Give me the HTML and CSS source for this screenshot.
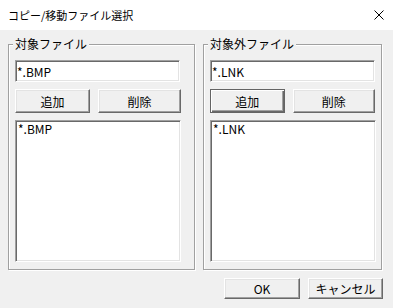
FILE: index.html
```html
<!DOCTYPE html>
<html lang="ja">
<head>
    <meta charset="UTF-8">
    <title>コピー/移動ファイル選択</title>
    <link rel="stylesheet" href="styles.css">
</head>
<body>
    <div class="titlebar">
        <span class="title">コピー/移動ファイル選択</span>
        <svg class="close" width="10" height="10" viewBox="0 0 10 10">
            <path d="M0.5 0.5 L9.5 9.5 M9.5 0.5 L0.5 9.5" stroke="#000" stroke-width="1" fill="none"/>
        </svg>
    </div>
    <div class="content">
        <div class="groups">
            <fieldset class="group group-left">
                <legend>対象ファイル</legend>
                <input class="field" type="text" value="*.BMP">
                <div class="btn-row">
                    <button class="btn btn-add">追加</button>
                    <button class="btn btn-del">削除</button>
                </div>
                <div class="list">
                    <div class="item">*.BMP</div>
                </div>
            </fieldset>
            <fieldset class="group group-right">
                <legend>対象外ファイル</legend>
                <input class="field" type="text" value="*.LNK">
                <div class="btn-row">
                    <button class="btn btn-add default">追加</button>
                    <button class="btn btn-del">削除</button>
                </div>
                <div class="list">
                    <div class="item">*.LNK</div>
                </div>
            </fieldset>
        </div>
        <div class="actions">
            <button class="btn btn-ok">OK</button>
            <button class="btn btn-cancel">キャンセル</button>
        </div>
    </div>
</body>
</html>
```

FILE: styles.css
```css
* {
    box-sizing: border-box;
}
body {
    margin: 0;
    width: 393px;
    height: 308px;
    background: #f0f0f0;
    font-family: "Noto Sans CJK JP", sans-serif;
    font-size: 12px;
    color: #000;
    overflow: hidden;
}
.titlebar {
    height: 30px;
    background: #fff;
    display: flex;
    align-items: center;
    justify-content: space-between;
    padding: 0 9px 0 8px;
}
.title {
    font-size: 11px;
    line-height: 12px;
}
.content {
    padding: 8px 11px 0 8px;
}
.groups {
    display: flex;
    gap: 8px;
}
.group {
    margin: 0;
    min-width: 0;
    padding: 10px 6px 7px 6px;
    border: 1px solid #a0a0a0;
    box-shadow: 1px 1px 0 #fff, inset 1px 1px 0 #fff;
    display: flex;
    flex-direction: column;
    gap: 7px;
}
.group-left {
    width: 187px;
}
.group-right {
    width: 179px;
}
.group legend {
    margin-left: -2px;
    padding: 0 2px;
    font-size: 12px;
    line-height: 12px;
    background: #f0f0f0;
}
.field {
    width: 165px;
    height: 22px;
    margin: 0;
    padding: 0 1px;
    font-family: "Noto Sans CJK JP", sans-serif;
    font-size: 12px;
    color: #000;
    background: #fff;
    border: 1px solid;
    border-color: #a0a0a0 #fff #fff #a0a0a0;
    box-shadow: inset 1px 1px 0 #696969, inset -1px -1px 0 #e3e3e3;
    outline: none;
}
.btn-row {
    display: flex;
    gap: 8px;
}
.btn {
    height: 24px;
    margin: 0;
    padding: 0;
    font-family: "Noto Sans CJK JP", sans-serif;
    font-size: 12px;
    color: #000;
    background: #f0f0f0;
    border: 1px solid;
    border-color: #fff #696969 #696969 #fff;
    box-shadow: inset -1px -1px 0 #a0a0a0, inset 1px 1px 0 #e3e3e3;
}
.btn.default {
    border-color: #646464;
    box-shadow: inset 1px 1px 0 #fff, inset -1px -1px 0 #696969, inset -2px -2px 0 #a0a0a0;
}
.btn-add {
    width: 75px;
}
.btn-del {
    width: 83px;
}
.list {
    width: 166px;
    height: 142px;
    padding: 1px 2px;
    background: #fff;
    border: 1px solid;
    border-color: #a0a0a0 #fff #fff #a0a0a0;
    box-shadow: inset 1px 1px 0 #696969, inset -1px -1px 0 #e3e3e3;
}
.item {
    line-height: 14px;
}
.actions {
    margin-top: 8px;
    margin-right: -1px;
    display: flex;
    justify-content: flex-end;
    gap: 8px;
}
.btn-ok {
    width: 76px;
    height: 21px;
}
.btn-cancel {
    width: 75px;
    height: 21px;
}
```
